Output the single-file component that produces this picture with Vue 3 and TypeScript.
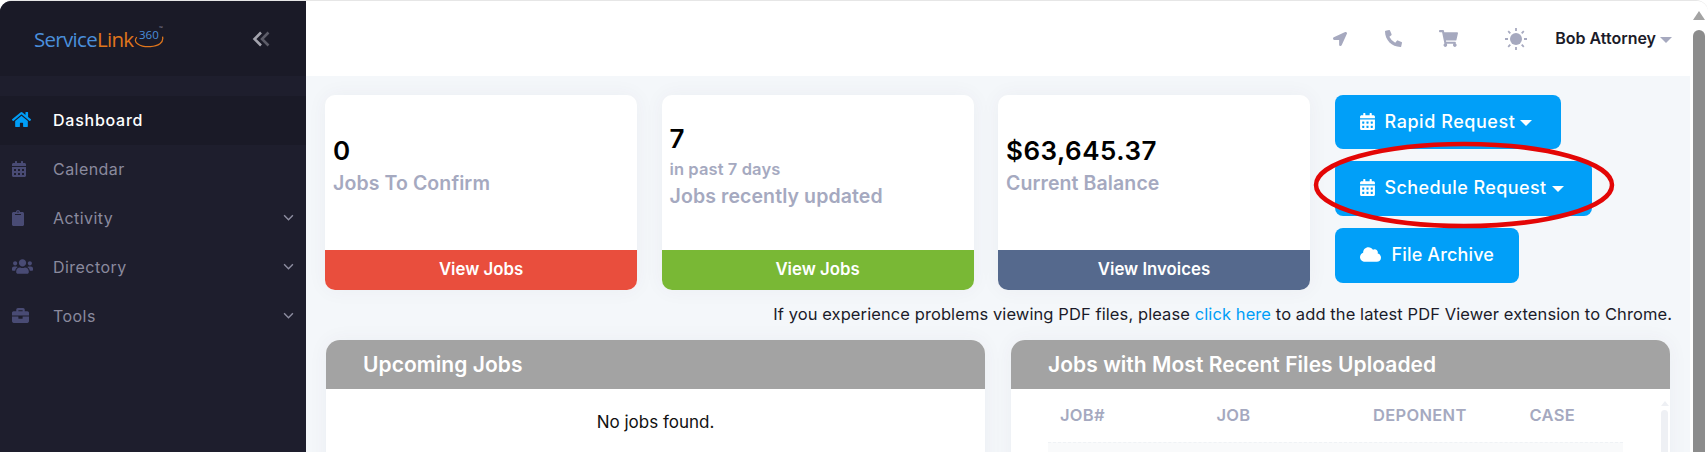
<template>
  <div class="shell">
    <aside class="sidebar">
      <div class="brand">
        <div class="logo">
          <span class="logo-blue">Service</span><span class="logo-orange">Link</span>
          <span class="logo-360">360</span>
          <span class="logo-tm">™</span>
          <svg class="logo-swoosh" viewBox="0 0 32 12" fill="none">
            <path d="M4 1C-1 6 7 11.500 18 10.800C26 10.300 32 7 30.500 0.500" stroke="#e0761c" stroke-width="1.300" />
          </svg>
        </div>
        <svg class="collapse" viewBox="0 0 18 16" fill="none" stroke-width="2.600">
          <path d="M9 1.500L2.500 8L9 14.500" stroke="#a3a3ad" />
          <path d="M16.500 1.500L10 8L16.500 14.500" stroke="#5c5c68" />
        </svg>
      </div>
      <nav class="nav">
        <a v-for="item in navItems" :key="item.label" class="nav-item" :class="{ active: item.active }">
          <span class="nav-icon">
            <svg :viewBox="item.box" preserveAspectRatio="xMinYMid meet" :style="{ width: item.size + 'px', height: item.size + 'px' }">
              <path :d="item.path" />
            </svg>
          </span>
          <span class="nav-label">{{ item.label }}</span>
          <svg v-if="item.more" class="nav-chevron" viewBox="0 0 10 6" fill="none">
            <path d="M1 1L5 5L9 1" stroke="#8d8da0" stroke-width="1.300" />
          </svg>
        </a>
      </nav>
    </aside>

    <div class="main">
      <header class="topbar">
        <svg class="top-icon arrow" viewBox="0 0 512 512"><path :d="icons.arrow" /></svg>
        <svg class="top-icon phone" viewBox="0 0 512 512"><path :d="icons.phone" /></svg>
        <svg class="top-icon cart" viewBox="0 0 576 512"><path :d="icons.cart" /></svg>
        <svg class="sun" viewBox="0 0 24 24">
          <circle cx="12" cy="12" r="6" fill="#a6a9bf" />
          <path
            d="M12 1v3M12 20v3M1 12h3M20 12h3M4.200 4.200l2.100 2.100M17.700 17.700l2.100 2.100M4.200 19.800l2.100-2.100M17.700 6.300l2.100-2.100"
            stroke="#a6a9bf"
            stroke-width="1.800"
          />
        </svg>
        <span class="user">Bob Attorney</span>
        <span class="user-caret"></span>
      </header>

      <main class="content">
        <section class="top-row">
          <div v-for="card in cards" :key="card.label" class="card">
            <div class="card-body">
              <div class="card-value">{{ card.value }}</div>
              <div v-if="card.sub" class="card-sub">{{ card.sub }}</div>
              <div class="card-label">{{ card.label }}</div>
            </div>
            <div class="card-foot" :class="card.tone">{{ card.action }}</div>
          </div>
          <div class="actions">
            <button class="action rapid">
              <svg class="action-icon" viewBox="0 0 448 512"><path :d="icons.calendar" /></svg>
              Rapid Request<span class="action-caret"></span>
            </button>
            <button class="action schedule">
              <svg class="action-icon" viewBox="0 0 448 512"><path :d="icons.calendar" /></svg>
              Schedule Request<span class="action-caret"></span>
            </button>
            <button class="action archive">
              <svg class="cloud-icon" viewBox="0 0 640 512"><path :d="icons.cloud" /></svg>
              File Archive
            </button>
          </div>
        </section>

        <p class="notice">
          If you experience problems viewing PDF files, please <a class="link">click here</a> to add the latest PDF
          Viewer extension to Chrome.
        </p>

        <section class="panels">
          <div class="panel">
            <h2 class="panel-head">Upcoming Jobs</h2>
            <div class="panel-empty">No jobs found.</div>
          </div>
          <div class="panel">
            <h2 class="panel-head">Jobs with Most Recent Files Uploaded</h2>
            <div class="panel-table">
              <div class="table">
                <div class="table-head">
                  <span v-for="col in columns" :key="col">{{ col }}</span>
                </div>
                <div class="table-row"></div>
              </div>
              <div class="mini-scroll">
                <span class="mini-arrow"></span>
                <span class="mini-thumb"></span>
              </div>
            </div>
          </div>
        </section>
      </main>
    </div>

    <div class="page-scroll">
      <span class="scroll-arrow"></span>
      <span class="scroll-thumb"></span>
    </div>

    <!-- hand drawn highlight on top of the screenshot -->
    <svg class="highlight" viewBox="0 0 304 90" fill="none">
      <ellipse cx="152" cy="45" rx="148" ry="41" stroke="#e30606" stroke-width="4.500" />
    </svg>
  </div>
</template>

<script setup lang="ts">
interface NavItem {
  label: string
  box: string
  size: number
  path: string
  active?: boolean
  more?: boolean
}

const icons = {
  home: 'M280.37 148.26L96 300.11V464a16 16 0 0 0 16 16l112.06-.29a16 16 0 0 0 15.92-16V368a16 16 0 0 1 16-16h64a16 16 0 0 1 16 16v95.64a16 16 0 0 0 16 16.05L464 480a16 16 0 0 0 16-16V300L295.67 148.26a12.19 12.19 0 0 0-15.3 0zM571.6 251.47L488 182.56V44.05a12 12 0 0 0-12-12h-56a12 12 0 0 0-12 12v72.61L318.47 43a48 48 0 0 0-61 0L4.34 251.47a12 12 0 0 0-1.6 16.9l25.5 31A12 12 0 0 0 45.15 301l235.22-193.74a12.19 12.19 0 0 1 15.3 0L530.9 301a12 12 0 0 0 16.9-1.6l25.5-31a12 12 0 0 0-1.7-16.93z',
  calendar: 'M0 464c0 26.5 21.5 48 48 48h352c26.5 0 48-21.5 48-48V192H0v272zm320-196c0-6.6 5.4-12 12-12h40c6.6 0 12 5.4 12 12v40c0 6.6-5.4 12-12 12h-40c-6.6 0-12-5.4-12-12v-40zm0 128c0-6.6 5.4-12 12-12h40c6.6 0 12 5.4 12 12v40c0 6.6-5.4 12-12 12h-40c-6.6 0-12-5.4-12-12v-40zM192 268c0-6.6 5.4-12 12-12h40c6.6 0 12 5.4 12 12v40c0 6.6-5.4 12-12 12h-40c-6.6 0-12-5.4-12-12v-40zm0 128c0-6.6 5.4-12 12-12h40c6.6 0 12 5.4 12 12v40c0 6.6-5.4 12-12 12h-40c-6.6 0-12-5.4-12-12v-40zM64 268c0-6.6 5.4-12 12-12h40c6.6 0 12 5.4 12 12v40c0 6.6-5.4 12-12 12H76c-6.6 0-12-5.4-12-12v-40zm0 128c0-6.6 5.4-12 12-12h40c6.6 0 12 5.4 12 12v40c0 6.6-5.4 12-12 12H76c-6.6 0-12-5.4-12-12v-40zM400 64h-48V16c0-8.8-7.2-16-16-16h-32c-8.8 0-16 7.2-16 16v48H160V16c0-8.8-7.2-16-16-16h-32c-8.8 0-16 7.2-16 16v48H48C21.5 64 0 85.5 0 112v48h448v-48c0-26.5-21.5-48-48-48z',
  clipboard: 'M384 112v352c0 26.51-21.49 48-48 48H48c-26.51 0-48-21.49-48-48V112c0-26.51 21.49-48 48-48h80c0-35.29 28.71-64 64-64s64 28.71 64 64h80c26.51 0 48 21.49 48 48zM192 40c-13.255 0-24 10.745-24 24s10.745 24 24 24 24-10.745 24-24-10.745-24-24-24m96 114v-20a6 6 0 0 0-6-6H102a6 6 0 0 0-6 6v20a6 6 0 0 0 6 6h180a6 6 0 0 0 6-6z',
  users: 'M96 224c35.3 0 64-28.7 64-64s-28.7-64-64-64-64 28.7-64 64 28.7 64 64 64zm448 0c35.3 0 64-28.7 64-64s-28.7-64-64-64-64 28.7-64 64 28.7 64 64 64zm32 32h-64c-17.6 0-33.5 7.1-45.1 18.6 40.3 22.1 68.9 62 75.1 109.4h66c17.7 0 32-14.3 32-32v-32c0-35.3-28.7-64-64-64zm-256 0c61.9 0 112-50.1 112-112S381.9 32 320 32 208 82.1 208 144s50.1 112 112 112zm76.8 32h-8.3c-20.8 10-43.9 16-68.5 16s-47.6-6-68.5-16h-8.3C179.6 288 128 339.6 128 403.2V432c0 26.5 21.5 48 48 48h288c26.5 0 48-21.5 48-48v-28.8c0-63.6-51.6-115.2-115.2-115.2zm-223.7-13.4C161.5 263.1 145.6 256 128 256H64c-35.3 0-64 28.7-64 64v32c0 17.7 14.3 32 32 32h65.9c6.3-47.4 34.9-87.3 75.2-109.4z',
  briefcase: 'M320 336c0 8.84-7.16 16-16 16h-96c-8.84 0-16-7.16-16-16v-48H0v144c0 25.6 22.4 48 48 48h416c25.6 0 48-22.4 48-48V288H320v48zm144-208h-80V80c0-25.6-22.4-48-48-48H176c-25.6 0-48 22.4-48 48v48H48c-25.6 0-48 22.4-48 48v80h512v-80c0-25.6-22.4-48-48-48zm-144 0H192V96h128v32z',
  arrow: 'M444.52 3.52L28.74 195.42c-47.97 22.39-31.98 92.75 19.19 92.75h175.91v175.91c0 51.17 70.36 67.17 92.75 19.19l191.9-415.78c15.99-38.39-25.59-79.97-63.97-63.97z',
  phone: 'M497.39 361.8l-112-48a24 24 0 0 0-28 6.9l-49.6 60.6A370.66 370.66 0 0 1 130.6 204.11l60.6-49.6a23.94 23.94 0 0 0 6.9-28l-48-112A24.16 24.16 0 0 0 122.6.61l-104 24A24 24 0 0 0 0 48c0 256.5 207.9 464 464 464a24 24 0 0 0 23.4-18.6l24-104a24.29 24.29 0 0 0-14.01-27.6z',
  cart: 'M528.12 301.319l47.273-208C578.806 78.301 567.391 64 551.99 64H159.208l-9.166-44.81C147.758 8.021 137.93 0 126.529 0H24C10.745 0 0 10.745 0 24v16c0 13.255 10.745 24 24 24h69.883l70.248 343.435C147.325 417.1 136 435.222 136 456c0 30.928 25.072 56 56 56s56-25.072 56-56c0-15.674-6.447-29.835-16.824-40h209.647C430.447 426.165 424 440.326 424 456c0 30.928 25.072 56 56 56s56-25.072 56-56c0-22.172-12.888-41.332-31.579-50.405l5.517-24.276c3.413-15.018-8.002-29.319-23.403-29.319H218.117l-6.545-32h293.145c11.206 0 20.92-7.754 23.403-18.681z',
  cloud: 'M537.6 226.6c4.1-10.7 6.4-22.4 6.4-34.6 0-53-43-96-96-96-19.7 0-38.1 6-53.3 16.2C367 64.2 315.3 32 256 32c-88.4 0-160 71.6-160 160 0 2.7.1 5.4.2 8.1C40.2 219.8 0 273.2 0 336c0 79.5 64.5 144 144 144h368c70.7 0 128-57.3 128-128 0-61.9-44-113.6-102.4-125.4z'
}

const navItems: NavItem[] = [
  { label: 'Dashboard', box: '0 0 576 512', size: 19, path: icons.home, active: true },
  { label: 'Calendar', box: '0 0 448 512', size: 16, path: icons.calendar },
  { label: 'Activity', box: '0 0 384 512', size: 16, path: icons.clipboard, more: true },
  { label: 'Directory', box: '0 0 640 512', size: 21, path: icons.users, more: true },
  { label: 'Tools', box: '0 0 512 512', size: 17, path: icons.briefcase, more: true }
]

const cards = [
  { value: '0', label: 'Jobs To Confirm', action: 'View Jobs', tone: 'red' },
  { value: '7', sub: 'in past 7 days', label: 'Jobs recently updated', action: 'View Jobs', tone: 'green' },
  { value: '$63,645.37', label: 'Current Balance', action: 'View Invoices', tone: 'slate' }
]

const columns = ['JOB#', 'JOB', 'DEPONENT', 'CASE']
</script>

<style>
html,
body {
  margin: 0;
  height: 100%;
  overflow: hidden;
  background: #fff;
}
</style>

<style scoped>
.shell {
  position: relative;
  display: flex;
  width: 1708px;
  height: 452px;
  overflow: hidden;
  box-sizing: border-box;
  border-top: 1px solid #e6e6e6;
  border-radius: 12px 12px 0 0;
  background: #fff;
  font-family: Inter, "Liberation Sans", sans-serif;
}

/* sidebar */
.sidebar {
  flex: 0 0 306px;
  background: #1e1e2d;
}
.brand {
  display: flex;
  align-items: center;
  height: 75px;
  padding-left: 34px;
  background: #1a1a27;
}
.logo {
  position: relative;
  width: 132px;
  height: 30px;
  font-family: "Open Sans", sans-serif;
  font-size: 20.500px;
  line-height: 30px;
  letter-spacing: -0.700px;
  white-space: nowrap;
}
.logo-blue {
  color: #4a8fdb;
}
.logo-orange {
  color: #e0761c;
}
.logo-360 {
  position: absolute;
  left: 105px;
  top: 1px;
  font-size: 11.500px;
  line-height: 20px;
  letter-spacing: 0;
  color: #4a8fdb;
}
.logo-tm {
  position: absolute;
  left: 125px;
  top: 0;
  font-size: 5px;
  line-height: 8px;
  letter-spacing: 0;
  color: #8a8a9e;
}
.logo-swoosh {
  position: absolute;
  left: 99px;
  top: 12px;
  width: 31px;
  height: 12px;
}
.collapse {
  width: 18px;
  height: 16px;
  margin-left: 86px;
}
.nav {
  padding-top: 20px;
}
.nav-item {
  display: flex;
  align-items: center;
  box-sizing: border-box;
  height: 49px;
  padding-bottom: 2px;
  color: #8a8a9e;
}
.nav-item.active {
  background: #1a1a27;
  color: #fff;
}
.nav-icon {
  display: flex;
  width: 41px;
  padding-left: 12px;
  box-sizing: border-box;
  fill: #494b74;
}
.nav-item.active .nav-icon {
  fill: #009ef7;
}
.nav-label {
  margin-left: 12px;
  font-size: 16px;
  letter-spacing: 0.450px;
}
.active .nav-label {
  font-weight: 500;
  letter-spacing: 0.750px;
}
.nav-chevron {
  width: 11px;
  height: 7px;
  margin-left: auto;
  margin-right: 12px;
}

/* header */
.main {
  flex: 1;
  display: flex;
  flex-direction: column;
  min-width: 0;
}
.topbar {
  flex: 0 0 75px;
  display: flex;
  align-items: center;
  justify-content: flex-end;
  padding-right: 18px;
  background: #fff;
}
.top-icon {
  fill: #a6a9bf;
}
.arrow {
  width: 14px;
  height: 14px;
  margin-right: 38px;
}
.phone {
  width: 17px;
  height: 17px;
  margin-right: 37px;
}
.cart {
  width: 19px;
  height: 17px;
  margin-right: 46px;
}
.sun {
  width: 24px;
  height: 24px;
  margin-right: 27px;
}
.user {
  margin-bottom: 2px;
  font-size: 16px;
  font-weight: 600;
  color: #1b1b29;
}
.user-caret {
  width: 0;
  height: 0;
  margin: 2px 0 0 4px;
  border: 6px solid transparent;
  border-top: 6px solid #a6a9bf;
  border-bottom: 0;
}

/* content */
.content {
  flex: 1;
  min-height: 0;
  padding: 19px 16px 0 19px;
  background: #f4f7fa;
}
.top-row {
  display: grid;
  grid-template-columns: 312px 312px 312px auto;
  column-gap: 24.500px;
  height: 195px;
}
.card {
  display: flex;
  flex-direction: column;
  border-radius: 10px;
  overflow: hidden;
  background: #fff;
  box-shadow: 0 0 20px rgba(82, 63, 105, 0.05);
}
.card-body {
  flex: 1;
  display: flex;
  flex-direction: column;
  justify-content: center;
  padding: 0 8px 15px;
}
.card-value {
  font-size: 26px;
  line-height: 36px;
  font-weight: 600;
  letter-spacing: 0.500px;
  color: #000;
}
.card-sub {
  font-size: 16.500px;
  line-height: 25px;
  font-weight: 600;
  letter-spacing: 0.100px;
  color: #a5a9c0;
}
.card-label {
  font-size: 19.500px;
  line-height: 28px;
  font-weight: 600;
  letter-spacing: 0.100px;
  color: #a5a9c0;
}
.card-foot {
  height: 40px;
  font-size: 16.800px;
  line-height: 39px;
  font-weight: 600;
  text-align: center;
  color: #fff;
}
.red {
  background: #e94e3d;
}
.green {
  background: #79b835;
}
.slate {
  background: #55698d;
}
.actions {
  display: flex;
  flex-direction: column;
  align-items: flex-start;
  gap: 12px;
}
.action {
  display: flex;
  align-items: center;
  height: 55px;
  padding: 0 30px 2px 25px;
  border: 0;
  border-radius: 8px;
  background: #019ff8;
  color: #fff;
  font-family: inherit;
  font-size: 18px;
  font-weight: 500;
  letter-spacing: 0.400px;
  white-space: nowrap;
}
.rapid {
  height: 54px;
  padding-right: 29px;
  letter-spacing: 0.550px;
}
.schedule {
  padding-right: 28px;
}
.action-icon {
  width: 15px;
  height: 17px;
  margin-right: 10px;
  fill: #fff;
}
.action-caret {
  width: 0;
  height: 0;
  margin: 3px 0 0 5px;
  border: 6px solid transparent;
  border-top: 6px solid #fff;
  border-bottom: 0;
}
.archive {
  padding-right: 25px;
  letter-spacing: 0.150px;
}
.cloud-icon {
  width: 21px;
  height: 17px;
  margin-right: 11px;
  fill: #fff;
}
.notice {
  margin: 0 2px 0 0;
  height: 50px;
  padding-top: 14px;
  box-sizing: border-box;
  font-size: 16.500px;
  line-height: 20px;
  letter-spacing: 0.090px;
  color: #1b1b29;
  text-align: right;
  white-space: nowrap;
}
.link {
  color: #009ef7;
}
.panels {
  display: grid;
  grid-template-columns: 1fr 1fr;
  column-gap: 26px;
  margin: 0 4px 0 1px;
}
.panel {
  height: 140px;
  border-radius: 14px 14px 0 0;
  overflow: hidden;
  background: #fff;
  box-shadow: 0 0 20px rgba(82, 63, 105, 0.05);
}
.panel-head {
  height: 49px;
  margin: 0 0 1px;
  padding-left: 37px;
  background: #a3a3a3;
  color: #fff;
  font-size: 21px;
  line-height: 49px;
  font-weight: 600;
  letter-spacing: 0.050px;
}
.panel-empty {
  margin-top: 23px;
  font-size: 17px;
  line-height: 20px;
  color: #111;
  text-align: center;
}
.panel-table {
  display: flex;
  height: 90px;
}
.table {
  width: 575px;
  margin-left: 37px;
}
.table-head {
  display: grid;
  grid-template-columns: repeat(4, 156.500px);
  height: 52px;
  padding-left: 12px;
  font-size: 16.500px;
  line-height: 51px;
  font-weight: 600;
  letter-spacing: 0.300px;
  color: #a5a9c0;
}
.table-row {
  height: 40px;
  border-top: 1px dashed #eff2f5;
  background: #f9fafb;
}
.mini-scroll {
  display: flex;
  flex-direction: column;
  align-items: center;
  width: 7px;
  margin-left: auto;
  margin-right: 2px;
  padding-top: 11px;
}
.mini-arrow {
  width: 0;
  height: 0;
  border: 4px solid transparent;
  border-top: 0;
  border-bottom: 5px solid #eef0f4;
}
.mini-thumb {
  width: 7px;
  flex: 1;
  margin-top: 4px;
  border-radius: 4px 4px 0 0;
  background: #eef0f4;
}

/* page scrollbar */
.page-scroll {
  flex: 0 0 18px;
  display: flex;
  flex-direction: column;
  align-items: center;
  background: #fff;
  padding-top: 10px;
}
.scroll-arrow {
  width: 0;
  height: 0;
  border: 6px solid transparent;
  border-top: 0;
  border-bottom: 9px solid #a3a3a3;
}
.scroll-thumb {
  flex: 1;
  width: 12px;
  margin-top: 10px;
  border-radius: 6px 6px 0 0;
  background: #8c8c8c;
}

.highlight {
  position: absolute;
  left: 1312px;
  top: 139px;
  width: 304px;
  height: 90px;
}
</style>
